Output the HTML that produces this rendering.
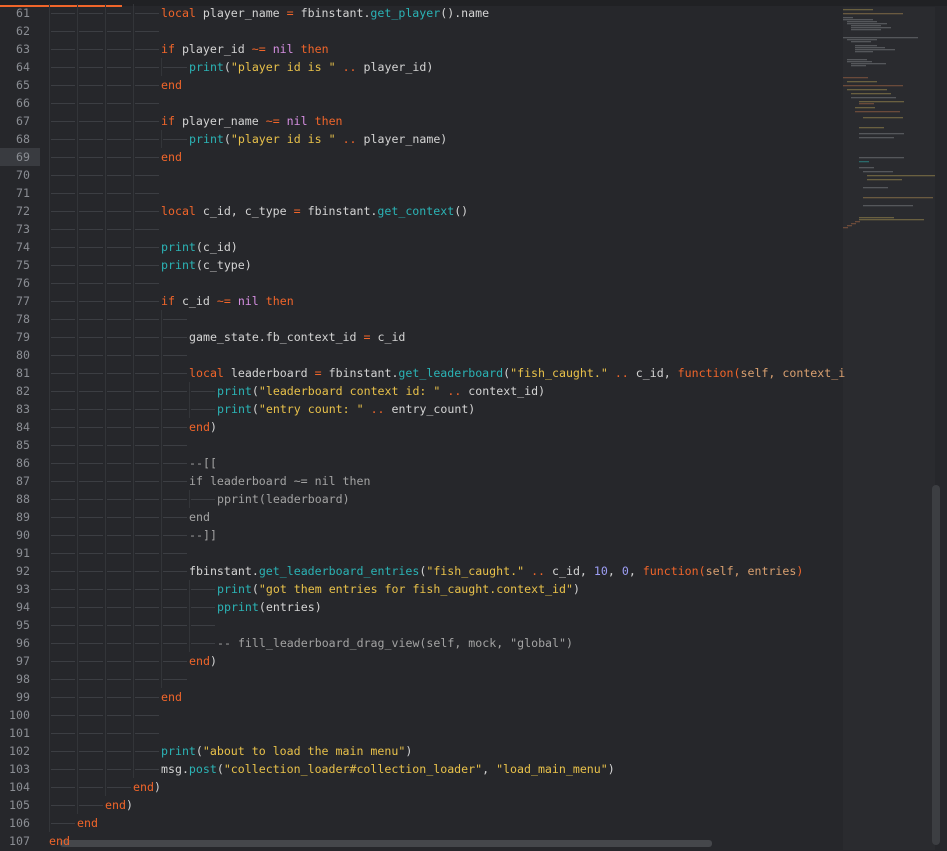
<!DOCTYPE html>
<html><head><meta charset="utf-8"><style>
body{margin:0;width:947px;height:850px;background:#26272b;overflow:hidden;position:relative;font-family:"DejaVu Sans Mono","Liberation Mono",monospace;font-size:11.6px;color:#d4d4d4}
.top{position:absolute;left:0;top:0;width:947px;height:6px;background:#202124}
.bar{position:absolute;left:0;top:5px;width:122px;height:2px;background:#f0652a}
.ln{position:absolute;left:0;width:30px;text-align:right;color:#8b8e94;height:18px;line-height:19px}
.hl{position:absolute;left:0;top:148px;width:40px;height:18px;background:#393b40}
.r{position:absolute;left:49px;height:18px;line-height:19px;white-space:pre}
.t{display:inline-block;width:28px;height:18px;vertical-align:top;position:relative}
.t::before{content:"";position:absolute;left:0;top:0;width:1px;height:18px;background:#333539}
.t::after{content:"";position:absolute;left:2px;right:2px;top:9px;height:1px;background:#3c3e43}
.k{color:#f0652a}.n{color:#d48ee0}.f{color:#2bb3b5}.s{color:#e8c14a}.p{color:#d9a070}.m{color:#9d9ef5}.c{color:#a3a3a3}
.mini{position:absolute;left:843px;top:7px;width:92px;height:843px;background:#2a2b2f}
.mini rect{height:1.3px}
.vs{position:absolute;left:932px;top:485px;width:8px;height:360px;background:#3c3e42;border-radius:4px}
.hs{position:absolute;left:60px;top:840px;width:652px;height:7px;background:#45474b;border-radius:3px}
</style></head><body>
<div class="top"></div><div class="bar"></div>
<div class="hl"></div>
<div class="mini"><svg width="92" height="230">
<g fill="#55575b">
<rect x="0" y="2" width="30" fill="#6a6040"/>
<rect x="0" y="6" width="60" fill="#6a5a40"/>
<rect x="0" y="10" width="10"/><rect x="0" y="12" width="30"/><rect x="4" y="14" width="30"/>
<rect x="4" y="16" width="40"/><rect x="8" y="18" width="30"/><rect x="8" y="20" width="40"/><rect x="8" y="22" width="30"/>
<rect x="0" y="30" width="75"/><rect x="4" y="32" width="30"/><rect x="8" y="34" width="20"/>
<rect x="12" y="38" width="22"/><rect x="12" y="40" width="30"/><rect x="12" y="42" width="40"/><rect x="12" y="44" width="18"/>
<rect x="4" y="52" width="20"/><rect x="4" y="54" width="25"/><rect x="8" y="56" width="35"/><rect x="8" y="58" width="15"/>
<rect x="0" y="70" width="25" fill="#6a4a3a"/><rect x="4" y="74" width="30" fill="#6a6040"/>
<rect x="0" y="78" width="60" fill="#6a4a3a"/><rect x="4" y="82" width="40" fill="#6a6040"/><rect x="8" y="86" width="40" fill="#6a6040"/>
<rect x="8" y="90" width="45"/><rect x="16" y="94" width="45" fill="#6a6040"/><rect x="16" y="96" width="15" fill="#6a4a3a"/>
<rect x="12" y="100" width="20" fill="#6a6040"/><rect x="12" y="104" width="45" fill="#6a4a3a"/><rect x="20" y="110" width="40" fill="#6a6040"/>
<rect x="16" y="120" width="25" fill="#6a6040"/><rect x="16" y="126" width="45"/><rect x="16" y="130" width="35"/>
<rect x="16" y="150" width="45"/><rect x="16" y="154" width="10" fill="#2a6a6b"/><rect x="16" y="160" width="15"/>
<rect x="20" y="164" width="30"/><rect x="24" y="168" width="75" fill="#6a6040"/><rect x="24" y="172" width="35" fill="#6a6040"/>
<rect x="20" y="180" width="25"/><rect x="20" y="190" width="70" fill="#6a5a40"/><rect x="20" y="198" width="50"/>
<rect x="16" y="210" width="35" fill="#6a6040"/><rect x="16" y="212" width="65" fill="#6a6040"/><rect x="12" y="214" width="5" fill="#6a4a3a"/><rect x="8" y="216" width="5" fill="#6a4a3a"/><rect x="4" y="218" width="5" fill="#6a4a3a"/><rect x="0" y="220" width="5" fill="#6a4a3a"/>
</g></svg></div>
<div class="vs"></div>

<div class="ln" style="top:4px">61</div><div class="r" style="top:4px"><span class="t"></span><span class="t"></span><span class="t"></span><span class="t"></span><span class="k">local</span> player_name <span class="k">=</span> fbinstant.<span class="f">get_player</span>().name</div>
<div class="ln" style="top:22px">62</div><div class="r" style="top:22px"><span class="t"></span><span class="t"></span><span class="t"></span><span class="t"></span></div>
<div class="ln" style="top:40px">63</div><div class="r" style="top:40px"><span class="t"></span><span class="t"></span><span class="t"></span><span class="t"></span><span class="k">if</span> player_id <span class="k">~=</span> <span class="n">nil</span> <span class="k">then</span></div>
<div class="ln" style="top:58px">64</div><div class="r" style="top:58px"><span class="t"></span><span class="t"></span><span class="t"></span><span class="t"></span><span class="t"></span><span class="f">print</span>(<span class="s">"player id is "</span> <span class="k">..</span> player_id)</div>
<div class="ln" style="top:76px">65</div><div class="r" style="top:76px"><span class="t"></span><span class="t"></span><span class="t"></span><span class="t"></span><span class="k">end</span></div>
<div class="ln" style="top:94px">66</div><div class="r" style="top:94px"><span class="t"></span><span class="t"></span><span class="t"></span><span class="t"></span></div>
<div class="ln" style="top:112px">67</div><div class="r" style="top:112px"><span class="t"></span><span class="t"></span><span class="t"></span><span class="t"></span><span class="k">if</span> player_name <span class="k">~=</span> <span class="n">nil</span> <span class="k">then</span></div>
<div class="ln" style="top:130px">68</div><div class="r" style="top:130px"><span class="t"></span><span class="t"></span><span class="t"></span><span class="t"></span><span class="t"></span><span class="f">print</span>(<span class="s">"player id is "</span> <span class="k">..</span> player_name)</div>
<div class="ln" style="top:148px">69</div><div class="r" style="top:148px"><span class="t"></span><span class="t"></span><span class="t"></span><span class="t"></span><span class="k">end</span></div>
<div class="ln" style="top:166px">70</div><div class="r" style="top:166px"><span class="t"></span><span class="t"></span><span class="t"></span><span class="t"></span></div>
<div class="ln" style="top:184px">71</div><div class="r" style="top:184px"><span class="t"></span><span class="t"></span><span class="t"></span><span class="t"></span></div>
<div class="ln" style="top:202px">72</div><div class="r" style="top:202px"><span class="t"></span><span class="t"></span><span class="t"></span><span class="t"></span><span class="k">local</span> c_id, c_type <span class="k">=</span> fbinstant.<span class="f">get_context</span>()</div>
<div class="ln" style="top:220px">73</div><div class="r" style="top:220px"><span class="t"></span><span class="t"></span><span class="t"></span><span class="t"></span></div>
<div class="ln" style="top:238px">74</div><div class="r" style="top:238px"><span class="t"></span><span class="t"></span><span class="t"></span><span class="t"></span><span class="f">print</span>(c_id)</div>
<div class="ln" style="top:256px">75</div><div class="r" style="top:256px"><span class="t"></span><span class="t"></span><span class="t"></span><span class="t"></span><span class="f">print</span>(c_type)</div>
<div class="ln" style="top:274px">76</div><div class="r" style="top:274px"><span class="t"></span><span class="t"></span><span class="t"></span><span class="t"></span></div>
<div class="ln" style="top:292px">77</div><div class="r" style="top:292px"><span class="t"></span><span class="t"></span><span class="t"></span><span class="t"></span><span class="k">if</span> c_id <span class="k">~=</span> <span class="n">nil</span> <span class="k">then</span></div>
<div class="ln" style="top:310px">78</div><div class="r" style="top:310px"><span class="t"></span><span class="t"></span><span class="t"></span><span class="t"></span><span class="t"></span></div>
<div class="ln" style="top:328px">79</div><div class="r" style="top:328px"><span class="t"></span><span class="t"></span><span class="t"></span><span class="t"></span><span class="t"></span>game_state.fb_context_id <span class="k">=</span> c_id</div>
<div class="ln" style="top:346px">80</div><div class="r" style="top:346px"><span class="t"></span><span class="t"></span><span class="t"></span><span class="t"></span><span class="t"></span></div>
<div class="ln" style="top:364px">81</div><div class="r" style="top:364px"><span class="t"></span><span class="t"></span><span class="t"></span><span class="t"></span><span class="t"></span><span class="k">local</span> leaderboard <span class="k">=</span> fbinstant.<span class="f">get_leaderboard</span>(<span class="s">"fish_caught."</span> <span class="k">..</span> c_id, <span class="k">function(</span><span class="p">self, context_i</span></div>
<div class="ln" style="top:382px">82</div><div class="r" style="top:382px"><span class="t"></span><span class="t"></span><span class="t"></span><span class="t"></span><span class="t"></span><span class="t"></span><span class="f">print</span>(<span class="s">"leaderboard context id: "</span> <span class="k">..</span> context_id)</div>
<div class="ln" style="top:400px">83</div><div class="r" style="top:400px"><span class="t"></span><span class="t"></span><span class="t"></span><span class="t"></span><span class="t"></span><span class="t"></span><span class="f">print</span>(<span class="s">"entry count: "</span> <span class="k">..</span> entry_count)</div>
<div class="ln" style="top:418px">84</div><div class="r" style="top:418px"><span class="t"></span><span class="t"></span><span class="t"></span><span class="t"></span><span class="t"></span><span class="k">end</span>)</div>
<div class="ln" style="top:436px">85</div><div class="r" style="top:436px"><span class="t"></span><span class="t"></span><span class="t"></span><span class="t"></span><span class="t"></span></div>
<div class="ln" style="top:454px">86</div><div class="r" style="top:454px"><span class="t"></span><span class="t"></span><span class="t"></span><span class="t"></span><span class="t"></span><span class="c">--[[</span></div>
<div class="ln" style="top:472px">87</div><div class="r" style="top:472px"><span class="t"></span><span class="t"></span><span class="t"></span><span class="t"></span><span class="t"></span><span class="c">if leaderboard ~= nil then</span></div>
<div class="ln" style="top:490px">88</div><div class="r" style="top:490px"><span class="t"></span><span class="t"></span><span class="t"></span><span class="t"></span><span class="t"></span><span class="t"></span><span class="c">pprint(leaderboard)</span></div>
<div class="ln" style="top:508px">89</div><div class="r" style="top:508px"><span class="t"></span><span class="t"></span><span class="t"></span><span class="t"></span><span class="t"></span><span class="c">end</span></div>
<div class="ln" style="top:526px">90</div><div class="r" style="top:526px"><span class="t"></span><span class="t"></span><span class="t"></span><span class="t"></span><span class="t"></span><span class="c">--]]</span></div>
<div class="ln" style="top:544px">91</div><div class="r" style="top:544px"><span class="t"></span><span class="t"></span><span class="t"></span><span class="t"></span><span class="t"></span></div>
<div class="ln" style="top:562px">92</div><div class="r" style="top:562px"><span class="t"></span><span class="t"></span><span class="t"></span><span class="t"></span><span class="t"></span>fbinstant.<span class="f">get_leaderboard_entries</span>(<span class="s">"fish_caught."</span> <span class="k">..</span> c_id, <span class="m">10</span>, <span class="m">0</span>, <span class="k">function(</span><span class="p">self, entries</span><span class="k">)</span></div>
<div class="ln" style="top:580px">93</div><div class="r" style="top:580px"><span class="t"></span><span class="t"></span><span class="t"></span><span class="t"></span><span class="t"></span><span class="t"></span><span class="f">print</span>(<span class="s">"got them entries for fish_caught.context_id"</span>)</div>
<div class="ln" style="top:598px">94</div><div class="r" style="top:598px"><span class="t"></span><span class="t"></span><span class="t"></span><span class="t"></span><span class="t"></span><span class="t"></span><span class="f">pprint</span>(entries)</div>
<div class="ln" style="top:616px">95</div><div class="r" style="top:616px"><span class="t"></span><span class="t"></span><span class="t"></span><span class="t"></span><span class="t"></span><span class="t"></span></div>
<div class="ln" style="top:634px">96</div><div class="r" style="top:634px"><span class="t"></span><span class="t"></span><span class="t"></span><span class="t"></span><span class="t"></span><span class="t"></span><span class="c">-- fill_leaderboard_drag_view(self, mock, "global")</span></div>
<div class="ln" style="top:652px">97</div><div class="r" style="top:652px"><span class="t"></span><span class="t"></span><span class="t"></span><span class="t"></span><span class="t"></span><span class="k">end</span>)</div>
<div class="ln" style="top:670px">98</div><div class="r" style="top:670px"><span class="t"></span><span class="t"></span><span class="t"></span><span class="t"></span><span class="t"></span></div>
<div class="ln" style="top:688px">99</div><div class="r" style="top:688px"><span class="t"></span><span class="t"></span><span class="t"></span><span class="t"></span><span class="k">end</span></div>
<div class="ln" style="top:706px">100</div><div class="r" style="top:706px"><span class="t"></span><span class="t"></span><span class="t"></span><span class="t"></span></div>
<div class="ln" style="top:724px">101</div><div class="r" style="top:724px"><span class="t"></span><span class="t"></span><span class="t"></span><span class="t"></span></div>
<div class="ln" style="top:742px">102</div><div class="r" style="top:742px"><span class="t"></span><span class="t"></span><span class="t"></span><span class="t"></span><span class="f">print</span>(<span class="s">"about to load the main menu"</span>)</div>
<div class="ln" style="top:760px">103</div><div class="r" style="top:760px"><span class="t"></span><span class="t"></span><span class="t"></span><span class="t"></span>msg.<span class="f">post</span>(<span class="s">"collection_loader#collection_loader"</span>, <span class="s">"load_main_menu"</span>)</div>
<div class="ln" style="top:778px">104</div><div class="r" style="top:778px"><span class="t"></span><span class="t"></span><span class="t"></span><span class="k">end</span>)</div>
<div class="ln" style="top:796px">105</div><div class="r" style="top:796px"><span class="t"></span><span class="t"></span><span class="k">end</span>)</div>
<div class="ln" style="top:814px">106</div><div class="r" style="top:814px"><span class="t"></span><span class="k">end</span></div>
<div class="hs"></div>
<div class="ln" style="top:832px">107</div><div class="r" style="top:832px"><span class="k">end</span></div>
</body></html>
